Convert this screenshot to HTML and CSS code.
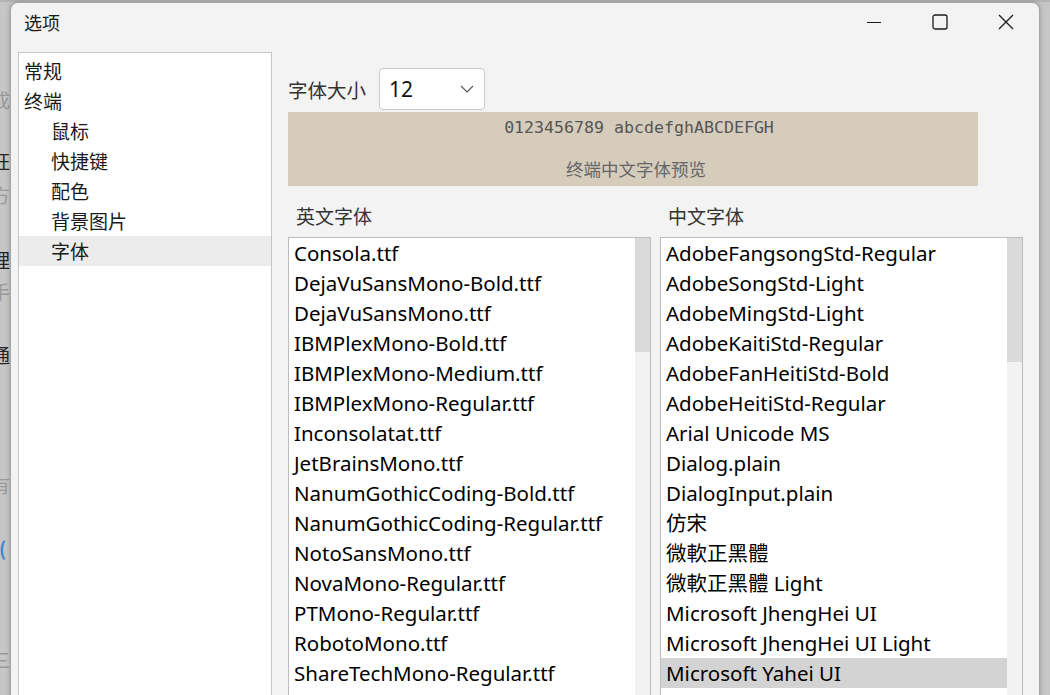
FILE: index.html
```html
<!DOCTYPE html>
<html lang="zh-CN">
<head>
<meta charset="utf-8">
<title>选项</title>
<link rel="stylesheet" href="styles.css">
</head>
<body>
<div class="desktop">
  <div class="bgwin">
    <div class="frag g">成</div>
    <div class="frag d">狂.</div>
    <div class="frag g">方</div>
    <div class="frag d">理</div>
    <div class="frag g">手</div>
    <div class="frag d">通</div>
    <div class="frag g">有</div>
    <div class="frag b">(</div>
    <div class="frag g">三</div>
  </div>

  <div class="dialog">
    <div class="titlebar">
      <span class="title">选项</span>
      <div class="controls">
        <div class="ctl"><svg width="16" height="16" viewBox="0 0 16 16"><line x1="1" y1="8.5" x2="15" y2="8.5" stroke="#1b1b1b" stroke-width="1.2"/></svg></div>
        <div class="ctl"><svg width="16" height="16" viewBox="0 0 16 16"><rect x="1" y="1" width="14" height="14" rx="2" fill="none" stroke="#1b1b1b" stroke-width="1.3"/></svg></div>
        <div class="ctl"><svg width="16" height="16" viewBox="0 0 16 16"><path d="M1 1 L15 15 M15 1 L1 15" stroke="#1b1b1b" stroke-width="1.3" fill="none"/></svg></div>
      </div>
    </div>

    <div class="body">
      <nav class="sidebar">
        <div class="nav-item">常规</div>
        <div class="nav-item">终端</div>
        <div class="nav-item sub">鼠标</div>
        <div class="nav-item sub">快捷键</div>
        <div class="nav-item sub">配色</div>
        <div class="nav-item sub">背景图片</div>
        <div class="nav-item sub active">字体</div>
      </nav>

      <main class="content">
        <div class="size-row">
          <span class="size-label">字体大小</span>
          <div class="select">
            <span class="select-value">12</span>
            <svg width="14" height="8" viewBox="0 0 14 8"><path d="M1 1 L7 7 L13 1" fill="none" stroke="#555" stroke-width="1.1"/></svg>
          </div>
        </div>

        <div class="preview">
          <div class="preview-mono">0123456789 abcdefghABCDEFGH</div>
          <div class="preview-cn">终端中文字体预览</div>
        </div>

        <div class="lists">
          <section class="col">
            <div class="col-label">英文字体</div>
            <div class="listbox">
              <div class="items">
                <div class="item">Consola.ttf</div>
                <div class="item">DejaVuSansMono-Bold.ttf</div>
                <div class="item">DejaVuSansMono.ttf</div>
                <div class="item">IBMPlexMono-Bold.ttf</div>
                <div class="item">IBMPlexMono-Medium.ttf</div>
                <div class="item">IBMPlexMono-Regular.ttf</div>
                <div class="item">Inconsolatat.ttf</div>
                <div class="item">JetBrainsMono.ttf</div>
                <div class="item">NanumGothicCoding-Bold.ttf</div>
                <div class="item">NanumGothicCoding-Regular.ttf</div>
                <div class="item">NotoSansMono.ttf</div>
                <div class="item">NovaMono-Regular.ttf</div>
                <div class="item">PTMono-Regular.ttf</div>
                <div class="item">RobotoMono.ttf</div>
                <div class="item">ShareTechMono-Regular.ttf</div>
                <div class="item">SourceCodePro-Regular.ttf</div>
              </div>
              <div class="scroll"><div class="thumb thumb-en"></div></div>
            </div>
          </section>
          <section class="col">
            <div class="col-label">中文字体</div>
            <div class="listbox">
              <div class="items">
                <div class="item">AdobeFangsongStd-Regular</div>
                <div class="item">AdobeSongStd-Light</div>
                <div class="item">AdobeMingStd-Light</div>
                <div class="item">AdobeKaitiStd-Regular</div>
                <div class="item">AdobeFanHeitiStd-Bold</div>
                <div class="item">AdobeHeitiStd-Regular</div>
                <div class="item">Arial Unicode MS</div>
                <div class="item">Dialog.plain</div>
                <div class="item">DialogInput.plain</div>
                <div class="item">仿宋</div>
                <div class="item">微軟正黑體</div>
                <div class="item">微軟正黑體 Light</div>
                <div class="item">Microsoft JhengHei UI</div>
                <div class="item">Microsoft JhengHei UI Light</div>
                <div class="item selected">Microsoft Yahei UI</div>
                <div class="item">Microsoft Yahei UI Light</div>
              </div>
              <div class="scroll"><div class="thumb thumb-cn"></div></div>
            </div>
          </section>
        </div>
      </main>
    </div>
  </div>
</div>
</body>
</html>
```

FILE: styles.css
```css
* { box-sizing: border-box; }

html, body {
  margin: 0;
  padding: 0;
  width: 1050px;
  height: 695px;
  overflow: hidden;
}

body {
  background: #c3c3c3;
  font-family: "Noto Sans", "Noto Sans CJK SC", sans-serif;
  color: #000;
}

.desktop {
  position: relative;
  width: 1050px;
  height: 695px;
  overflow: hidden;
  background: linear-gradient(to bottom, #b4b4b4 0, #b4b4b4 2px, #c6c6c6 2px);
}

/* background window peeking out on the left */
.bgwin {
  position: absolute;
  left: -9px;
  top: 0;
  width: 60px;
  height: 695px;
  display: flex;
  flex-direction: column;
  font-family: "Noto Sans CJK SC", sans-serif;
  font-size: 19px;
}
.frag { line-height: 24px; height: 24px; white-space: nowrap; }
.frag.g { color: #9a9a9a; }
.frag.d { color: #222; }
.frag.b { color: #3f86d0; font-weight: bold; padding-left: 8px; }
.frag:nth-child(1) { margin-top: 88px; }
.frag:nth-child(2) { margin-top: 37px; }
.frag:nth-child(3) { margin-top: 10px; }
.frag:nth-child(4) { margin-top: 41px; }
.frag:nth-child(5) { margin-top: 8px; }
.frag:nth-child(6) { margin-top: 39px; }
.frag:nth-child(7) { margin-top: 106px; }
.frag:nth-child(8) { margin-top: 39px; }
.frag:nth-child(9) { margin-top: 88px; }

/* dialog window */
.dialog {
  position: absolute;
  left: 10px;
  top: 2px;
  width: 1030px;
  height: 720px;
  background: #f3f3f3;
  border: 1px solid #a6a6a6;
  border-radius: 8px 8px 0 0;
  box-shadow: 0 0 5px rgba(0, 0, 0, 0.25);
  display: flex;
  flex-direction: column;
  overflow: hidden;
}

.titlebar {
  height: 49px;
  flex: none;
  display: flex;
  justify-content: space-between;
  align-items: flex-start;
}
.title {
  padding-left: 13px;
  padding-top: 7px;
  font-family: "Noto Sans CJK SC", sans-serif;
  font-size: 18px;
  line-height: 24px;
  color: #1a1a1a;
}
.controls { display: flex; }
.ctl {
  width: 66px;
  height: 38px;
  display: flex;
  align-items: center;
  justify-content: center;
}

.body {
  flex: 1;
  display: flex;
  padding-left: 7px;
}

.sidebar {
  width: 254px;
  flex: none;
  background: #fff;
  border: 1px solid #c6c6c6;
  border-bottom: none;
  padding-top: 3px;
}
.nav-item {
  height: 30px;
  line-height: 30px;
  padding-left: 5px;
  font-family: "Noto Sans CJK SC", sans-serif;
  font-size: 19px;
  color: #1a1a1a;
}
.nav-item.sub { padding-left: 32px; }
.nav-item.active { background: #ececec; }

.content {
  flex: 1;
  margin-left: 16px;
  padding-top: 16px;
  padding-right: 16px;
  display: flex;
  flex-direction: column;
}

.size-row {
  display: flex;
  align-items: center;
  gap: 13px;
  height: 42px;
}
.size-label {
  font-family: "Noto Sans CJK SC", sans-serif;
  font-size: 19.5px;
  color: #333;
}
.select {
  width: 106px;
  height: 42px;
  background: #fff;
  border: 1px solid #cbcbcb;
  border-radius: 4px;
  display: flex;
  align-items: center;
  justify-content: space-between;
  padding: 0 10px 0 9px;
}
.select-value { font-size: 21px; color: #111; }

.preview {
  margin-top: 2px;
  width: 690px;
  height: 74px;
  background: #d5ccbc;
  display: flex;
  flex-direction: column;
  align-items: center;
}
.preview-mono {
  margin-top: 6px;
  font-family: "DejaVu Sans Mono", monospace;
  font-size: 16.6px;
  line-height: 20px;
  color: #555;
  padding-left: 12px;
}
.preview-cn {
  margin-top: 19px;
  font-family: "Noto Sans CJK SC", sans-serif;
  font-size: 17.5px;
  line-height: 24px;
  color: #666;
  padding-left: 6px;
}

.lists {
  display: grid;
  grid-template-columns: 363px 363px;
  column-gap: 9px;
}
.col-label {
  margin-top: 17px;
  margin-bottom: 8px;
  padding-left: 8px;
  font-family: "Noto Sans CJK SC", sans-serif;
  font-size: 19px;
  line-height: 26px;
  color: #333;
}
.listbox {
  height: 470px;
  background: #fff;
  border: 1px solid #bcbcbc;
  border-bottom: none;
  display: flex;
  overflow: hidden;
}
.items { flex: 1; min-width: 0; }
.item {
  height: 30px;
  line-height: 30px;
  padding-left: 5px;
  font-size: 20.5px;
  white-space: nowrap;
  overflow: hidden;
  color: #000;
}
.item.selected { background: #d3d3d3; }

.scroll {
  width: 15px;
  flex: none;
  background: #f2f2f2;
}
.thumb { background: #dadada; }
.thumb-en { height: 114px; }
.thumb-cn { height: 124px; }
```
